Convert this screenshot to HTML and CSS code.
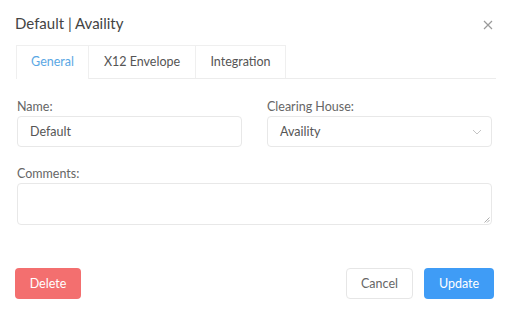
FILE: index.html
```html
<!DOCTYPE html>
<html>
<head>
<meta charset="utf-8">
<link rel="stylesheet" href="styles.css">
</head>
<body>
<div class="modal">
  <div class="header">
    <div class="title">Default | Availity</div>
    <svg class="close" width="10" height="10" viewBox="0 0 10 10"><path d="M1 1L9 9M9 1L1 9" stroke="#9a9a9a" stroke-width="1.2" fill="none"/></svg>
  </div>
  <div class="tabs">
    <div class="tab active">General</div>
    <div class="tab">X12 Envelope</div>
    <div class="tab">Integration</div>
  </div>
  <div class="form">
    <div class="row two">
      <div class="field">
        <label>Name:</label>
        <div class="input">Default</div>
      </div>
      <div class="field">
        <label>Clearing House:</label>
        <div class="input select">Availity
          <svg class="chev" width="10" height="6" viewBox="0 0 10 6"><path d="M1 1L5 5L9 1" stroke="#c4c4c4" stroke-width="1" fill="none"/></svg>
        </div>
      </div>
    </div>
    <div class="field">
      <label>Comments:</label>
      <div class="textarea">
        <svg class="grip" width="6" height="6" viewBox="0 0 6 6"><path d="M0.5 5.5L5.5 0.5M3 5.5L5.5 3" stroke="#999" stroke-width="0.8"/></svg>
      </div>
    </div>
  </div>
  <div class="footer">
    <button class="btn danger">Delete</button>
    <div class="right">
      <button class="btn plain">Cancel</button>
      <button class="btn primary">Update</button>
    </div>
  </div>
</div>
</body>
</html>
```
FILE: styles.css
```css
html, body {
  margin: 0;
  padding: 0;
  background: #fff;
}
body {
  font-family: "Lato", "Open Sans", sans-serif;
  color: #555;
  width: 509px;
  height: 315px;
  overflow: hidden;
}
.modal {
  padding: 13px 13px 0 15px;
}
.header {
  display: flex;
  justify-content: space-between;
  align-items: flex-start;
  height: 32px;
}
.title {
  font-size: 15px;
  line-height: 20px;
  color: #444;
}
.close {
  margin-top: 7px;
  margin-right: 3px;
}
.tabs {
  display: flex;
  margin-left: 1px;
  border-bottom: 1px solid #ececec;
  height: 33px;
}
.tab {
  height: 33px;
  box-sizing: border-box;
  line-height: 32px;
  font-size: 12.5px;
  color: #555;
  border: 1px solid #efefef;
  border-left: none;
  border-bottom: none;
  text-align: center;
}
.tab:first-child { border-left: 1px solid #efefef; }
.tab:nth-child(1) { width: 73px; }
.tab:nth-child(2) { width: 107px; }
.tab:nth-child(3) { width: 90px; }
.tab.active {
  color: #5aa7e4;
  background: #fff;
  height: 34px;
}
.form {
  padding: 20px 0 0 2px;
  width: 475px;
  display: flex;
  flex-direction: column;
  gap: 19px;
}
.row.two {
  display: grid;
  grid-template-columns: 225px 225px;
  column-gap: 25px;
}
.field label {
  display: block;
  font-size: 12.5px;
  color: #666;
  line-height: 16px;
  margin-bottom: 1px;
}
.input {
  height: 31px;
  box-sizing: border-box;
  border: 1px solid #e8e8e8;
  border-radius: 4px;
  padding: 0 12px;
  font-size: 12.5px;
  line-height: 29px;
  color: #555;
  position: relative;
}
.chev {
  position: absolute;
  right: 9px;
  top: 12px;
}
.textarea {
  height: 42px;
  box-sizing: border-box;
  border: 1px solid #e8e8e8;
  border-radius: 4px;
  position: relative;
}
.grip {
  position: absolute;
  right: 1px;
  bottom: 1px;
}
.footer {
  margin-top: 43px;
  display: flex;
  justify-content: space-between;
  width: 479px;
}
.right {
  display: flex;
  gap: 11px;
}
.btn {
  height: 31px;
  border-radius: 4px;
  font-family: inherit;
  font-size: 12.5px;
  padding: 0;
  border: 1px solid transparent;
}
.danger {
  width: 66px;
  background: #f36f6f;
  color: #fff;
}
.plain {
  width: 67px;
  background: #fff;
  border-color: #e6e6e6;
  color: #666;
}
.primary {
  width: 70px;
  background: #3f9cf6;
  color: #fff;
}
```
